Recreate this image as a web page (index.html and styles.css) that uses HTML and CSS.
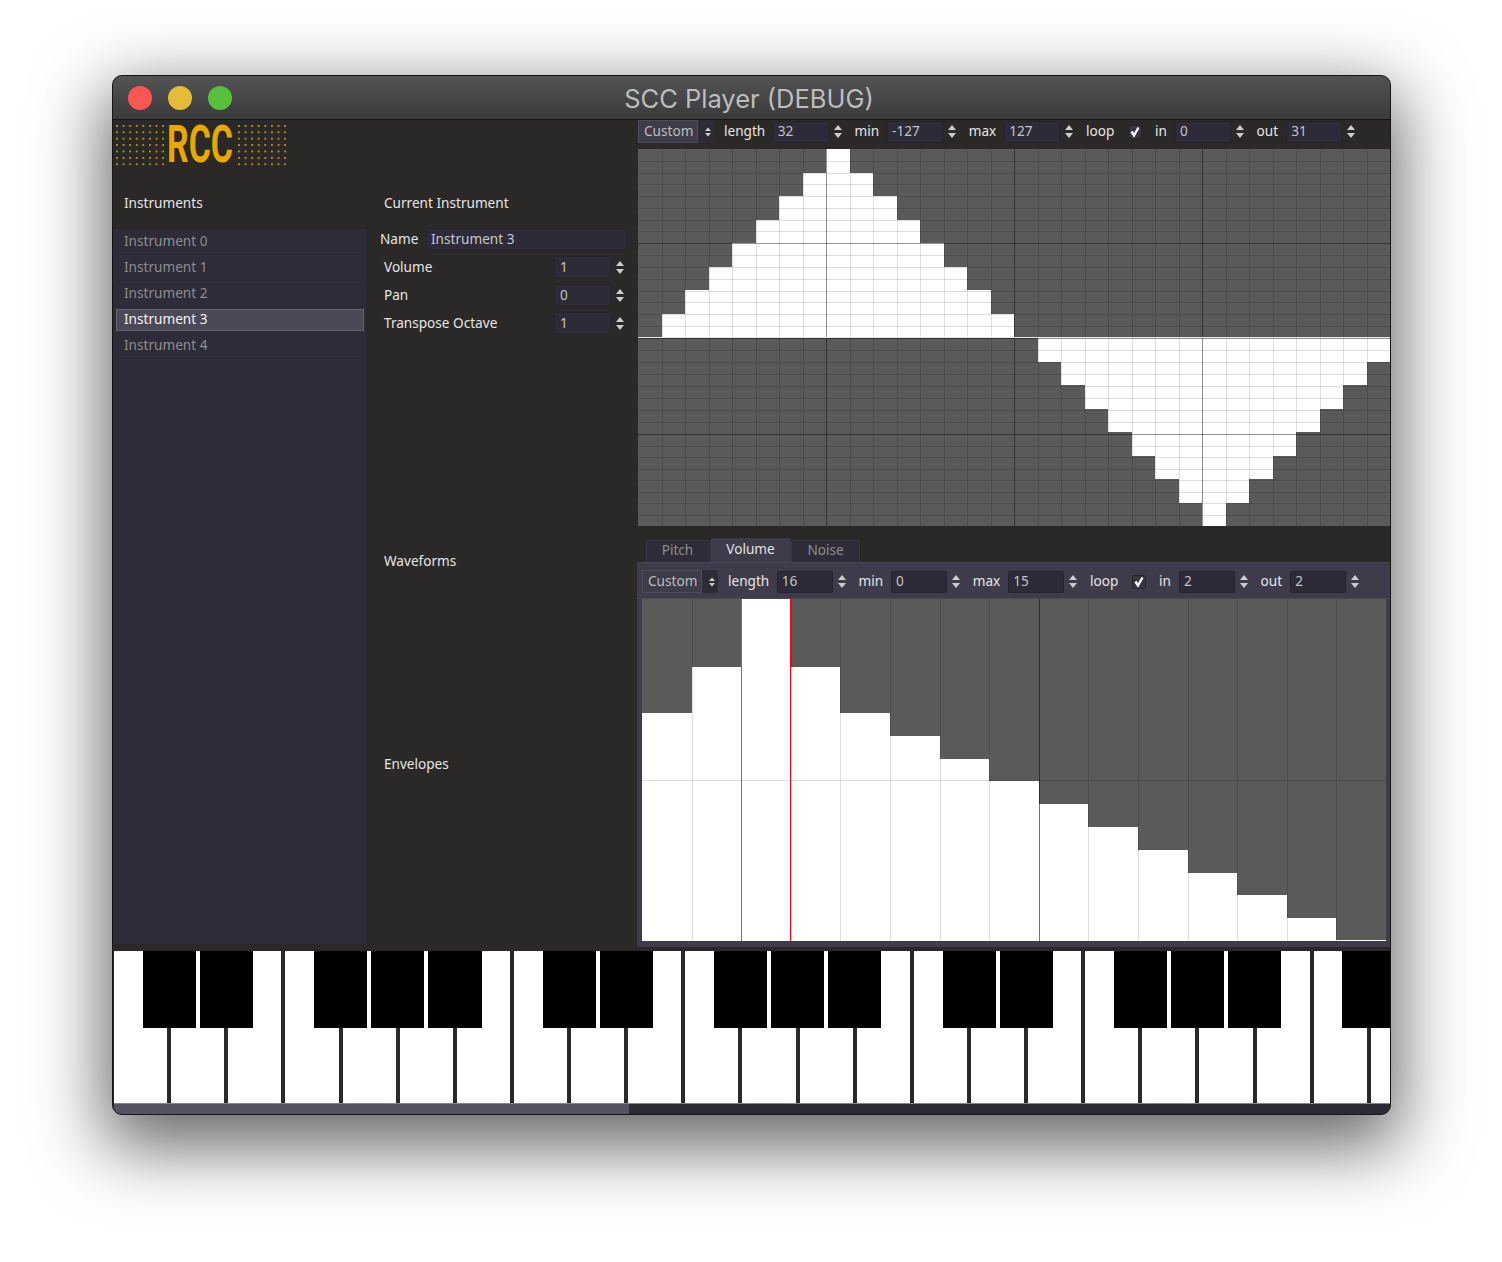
FILE: index.html
```html
<!DOCTYPE html>
<html lang="en">
<head>
    <meta charset="UTF-8">
    <title>SCC Player (DEBUG)</title>
    <link rel="stylesheet" href="styles.css">
</head>
<body>

    <svg class="defs" width="0" height="0">
        <symbol id="spin" viewBox="0 0 10 15">
            <path d="M5 1 L9 6 H1 Z M1 9 H9 L5 14 Z"/>
        </symbol>
        <symbol id="spin-small" viewBox="0 0 6 10">
            <path d="M3 0.5 L6 4 H0 Z M0 6 H6 L3 9.5 Z"/>
        </symbol>
    </svg>

    <div class="window">
        <div class="titlebar">
            <span class="light red"></span>
            <span class="light yellow"></span>
            <span class="light green"></span>
            <span class="title">SCC Player (DEBUG)</span>
        </div>

        <div class="main">
            <!-- instruments -->
            <div class="col-left">
                <div class="logo">
                    <span class="dots"></span>
                    <span class="logo-box"><span class="logo-text">RCC</span></span>
                    <span class="dots"></span>
                </div>
                <div class="heading">Instruments</div>
                <div class="list">
                    <div class="item">Instrument 0</div>
                    <div class="item">Instrument 1</div>
                    <div class="item">Instrument 2</div>
                    <div class="item selected">Instrument 3</div>
                    <div class="item">Instrument 4</div>
                </div>
            </div>

            <!-- current instrument -->
            <div class="col-mid">
                <div class="heading">Current Instrument</div>
                <div class="name-row">
                    <span class="name-label">Name</span>
                    <span class="input name-input">Instrument 3</span>
                </div>
                <div class="prop-row">
                    <span class="prop-label">Volume</span>
                    <span class="input">1</span>
                    <svg class="spin"><use href="#spin"/></svg>
                </div>
                <div class="prop-row">
                    <span class="prop-label">Pan</span>
                    <span class="input">0</span>
                    <svg class="spin"><use href="#spin"/></svg>
                </div>
                <div class="prop-row">
                    <span class="prop-label">Transpose Octave</span>
                    <span class="input">1</span>
                    <svg class="spin"><use href="#spin"/></svg>
                </div>
                <div class="heading waveforms">Waveforms</div>
                <div class="heading envelopes">Envelopes</div>
            </div>

            <!-- editors -->
            <div class="col-right">
                <div class="toolbar">
                    <span class="option">Custom</span>
                    <span class="option-arrow"><svg class="spin-small"><use href="#spin-small"/></svg></span>
                    <span class="tool-label first">length</span>
                    <span class="input">32</span>
                    <svg class="spin"><use href="#spin"/></svg>
                    <span class="tool-label">min</span>
                    <span class="input">-127</span>
                    <svg class="spin"><use href="#spin"/></svg>
                    <span class="tool-label">max</span>
                    <span class="input">127</span>
                    <svg class="spin"><use href="#spin"/></svg>
                    <span class="tool-label">loop</span>
                    <span class="check"><svg viewBox="0 0 12 12"><path d="M2.5 5.5 L5 9.5 L9.5 1.5"/></svg></span>
                    <span class="tool-label">in</span>
                    <span class="input">0</span>
                    <svg class="spin"><use href="#spin"/></svg>
                    <span class="tool-label">out</span>
                    <span class="input">31</span>
                    <svg class="spin"><use href="#spin"/></svg>
                </div>

                <svg id="wave" class="wave" width="752" height="377"></svg>

                <div class="tabs">
                    <span class="tab tab-pitch">Pitch</span>
                    <span class="tab active">Volume</span>
                    <span class="tab tab-noise">Noise</span>
                </div>
                <div class="tab-panel">
                    <div class="toolbar panel-toolbar">
                        <span class="option">Custom</span>
                        <span class="option-arrow"><svg class="spin-small"><use href="#spin-small"/></svg></span>
                        <span class="tool-label first">length</span>
                        <span class="input">16</span>
                        <svg class="spin"><use href="#spin"/></svg>
                        <span class="tool-label">min</span>
                        <span class="input">0</span>
                        <svg class="spin"><use href="#spin"/></svg>
                        <span class="tool-label">max</span>
                        <span class="input">15</span>
                        <svg class="spin"><use href="#spin"/></svg>
                        <span class="tool-label">loop</span>
                        <span class="check"><svg viewBox="0 0 12 12"><path d="M2.5 5.5 L5 9.5 L9.5 1.5"/></svg></span>
                        <span class="tool-label">in</span>
                        <span class="input">2</span>
                        <svg class="spin"><use href="#spin"/></svg>
                        <span class="tool-label">out</span>
                        <span class="input">2</span>
                        <svg class="spin"><use href="#spin"/></svg>
                    </div>
                    <svg id="envelope" class="envelope" width="744" height="342"></svg>
                </div>
            </div>
        </div>

        <div id="piano" class="piano"></div>
        <div class="scrollbar"><div class="thumb"></div></div>
    </div>

    <script src="app.js"></script>
</body>
</html>
```

FILE: styles.css
```css
:root {
    --bg: #2a2927;
    --list: #2d2c38;
    --input: #2c2b37;
    --panel: #3e3c4a;
    --plot: #5a5a5a;
    --text: #e6e6e6;
    --muted: #8e8e8e;
    --value: #c4c4c4;
}

* { margin: 0; padding: 0; box-sizing: border-box; }

html, body {
    height: 100%;
    overflow: hidden;
}

body {
    background: #fff;
    color: var(--text);
    font-family: "Noto Sans", sans-serif;
    font-size: 13.6px;
    line-height: 20px;
}

.defs { position: absolute; }

.window {
    width: 1279px;
    height: 1040px;
    margin: 75px 0 0 112px;
    display: flex;
    flex-direction: column;
    padding-left: 1px;
    background: var(--bg);
    border: 1px solid #161616;
    border-radius: 10px;
    overflow: hidden;
    box-shadow: 0 24px 70px 8px rgba(0,0,0,0.6);
}

/* title bar */
.titlebar {
    flex: none;
    height: 44px;
    margin-left: -1px;
    padding-left: 15px;
    display: flex;
    align-items: center;
    gap: 16px;
    position: relative;
    background: linear-gradient(#535353, #3a3a3a);
    border-bottom: 1px solid #141414;
}

.light {
    width: 24px;
    height: 24px;
    border-radius: 50%;
}
.red { background: #fc5753; }
.yellow { background: #e5bc3a; }
.green { background: #56c03b; }

.title {
    position: absolute;
    left: 511px;
    top: 7px;
    width: 250px;
    text-align: center;
    color: #bdbdbd;
    font-family: "Inter", sans-serif;
    font-size: 25.5px;
    line-height: 32px;
    white-space: nowrap;
}

.main {
    flex: none;
    height: 831px;
    display: flex;
}

/* left column */
.col-left {
    flex: none;
    width: 253px;
    display: flex;
    flex-direction: column;
    padding-bottom: 7px;
}

.logo {
    height: 48px;
    padding: 5px 0 0 2px;
    display: flex;
    gap: 3px;
}

.dots {
    width: 48px;
    height: 44px;
    background-image: radial-gradient(circle at 1px 1px, #c08f10 1px, transparent 1.3px);
    background-size: 6.6px 6.4px;
}

.logo-box {
    width: 68px;
    height: 40px;
}

.logo-text {
    display: inline-block;
    color: #e8a800;
    font-family: "Roboto", sans-serif;
    font-weight: 700;
    font-size: 52px;
    line-height: 40px;
    transform: scaleX(0.65);
    transform-origin: left center;
}

.heading {
    height: 20px;
    margin-left: 10px;
}
.col-left .heading { margin-top: 25px; }

.list {
    flex: 1;
    margin-top: 15px;
    padding: 0 2px;
    background: var(--list);
    border-top: 1px solid #26252f;
    border-right: 1px solid #26252f;
}

.item {
    height: 26px;
    padding: 2px 8px 0 8px;
    color: var(--muted);
    border-bottom: 1px solid #292833;
}

.item.selected {
    height: 22px;
    margin: 2px 0;
    padding: 0 7px;
    color: #f2f2f2;
    background: #4b4957;
    border: 1px solid #65636f;
    line-height: 18px;
}

/* middle column */
.col-mid {
    flex: none;
    width: 270px;
    padding-left: 7px;
    display: flex;
    flex-direction: column;
}
.col-mid .heading { margin: 73px 0 0 10px; }
.col-mid .heading.waveforms { margin-top: 211px; }
.col-mid .heading.envelopes { margin-top: 183px; }

.input {
    flex: none;
    width: 56px;
    height: 22px;
    padding-left: 4px;
    color: var(--value);
    background: var(--input);
    border: 1px solid #25242e;
    border-radius: 2px;
    line-height: 20px;
}

.name-row {
    display: flex;
    align-items: center;
    margin: 15px 0 6px 6px;
}
.name-label { width: 46px; }
.name-input { width: 201px; color: #c8c8c8; }

.prop-row {
    display: flex;
    align-items: center;
    height: 22px;
    margin: 0 0 6px 10px;
}
.prop-label { width: 171px; margin-right: -1px; }
.prop-row .input { width: 57px; padding-left: 5px; }

.spin {
    flex: none;
    width: 10px;
    height: 15px;
    margin-left: 4px;
    fill: #cdcdcd;
}

/* right column */
.col-right {
    flex: none;
    width: 753px;
    display: flex;
    flex-direction: column;
}

.toolbar {
    display: flex;
    align-items: center;
    height: 29px;
    padding: 0 0 6px 1px;
}
.toolbar .input { line-height: 18px; }

.option {
    height: 23px;
    width: 60px;
    padding-left: 5px;
    color: #bdbdbd;
    background: #3e3c4a;
    border: 1px solid #4e4c5a;
    line-height: 20px;
}

.option-arrow {
    width: 16px;
    height: 23px;
    padding-left: 7px;
    display: flex;
    align-items: center;
    background: #2c2b36;
    border-radius: 0 2px 2px 0;
}

.spin-small {
    width: 6px;
    height: 10px;
    fill: #cdcdcd;
}

.tool-label {
    margin: 0 8px 2px 11.7px;
    white-space: nowrap;
}
.tool-label.first { margin: 0 7.5px 2px 10px; }

.check {
    width: 14px;
    height: 14px;
    margin: 0 1px 0 6px;
    background: #35343f;
    border: 1px solid #25242e;
    border-radius: 2px;
}
.check svg {
    display: block;
    width: 12px;
    height: 12px;
    fill: none;
    stroke: #fff;
    stroke-width: 2.4;
}

.wave {
    display: block;
    flex: none;
    margin-left: 1px;
    background: var(--plot);
}

.envelope {
    display: block;
    flex: none;
    margin-left: 5px;
    background: var(--plot);
}

.tabs {
    display: flex;
    align-items: flex-end;
    height: 24px;
    margin: 12px 0 0 9px;
}

.tab {
    height: 22px;
    line-height: 18px;
    text-align: center;
    color: var(--muted);
    background: var(--list);
    border: 1px solid #3a3845;
    border-bottom: 0;
    border-radius: 3px 3px 0 0;
}
.tab-pitch { width: 63px; margin-right: 1px; }
.tab-noise { width: 69px; }

.tab.active {
    width: 81px;
    height: 24px;
    line-height: 20px;
    color: #e2e2e2;
    background: var(--panel);
}

.tab-panel {
    height: 385px;
    background: var(--panel);
    border-top: 1px solid #4a4856;
    border-radius: 2px 2px 0 0;
}

.panel-toolbar {
    height: 36px;
    padding: 2px 0 0 5px;
    border-bottom: 1px solid #4a4856;
}

/* piano */
.piano {
    flex: none;
    height: 152px;
    display: flex;
    gap: 4px;
    overflow: hidden;
}

.white-key {
    flex: none;
    width: 53.14px;
    position: relative;
    background: #fff;
}

.black-key {
    position: absolute;
    top: 0;
    left: 28.75px;
    width: 53.14px;
    height: 77px;
    background: #000;
    z-index: 1;
}

.scrollbar {
    flex: none;
    height: 11px;
    background: #2c2b33;
    border-top: 1px solid #85848c;
}

.thumb {
    width: 515px;
    height: 100%;
    background: #55535f;
}
```

FILE: app.js
```javascript
const NS = "http://www.w3.org/2000/svg";

function add(svg, tag, attrs) {
    const el = document.createElementNS(NS, tag);
    for (const k in attrs) el.setAttribute(k, attrs[k]);
    svg.appendChild(el);
}

function line(svg, x1, y1, x2, y2, color) {
    add(svg, "line", { x1, y1, x2, y2, stroke: color, "stroke-width": 1, "shape-rendering": "crispEdges" });
}

function rect(svg, x, y, width, height, fill = "#fff") {
    add(svg, "rect", { x, y, width, height, fill, "shape-rendering": "crispEdges" });
}

// waveform: 32 steps, triangle
const wave = document.getElementById("wave");
const waveW = 752, waveH = 377, top0 = 188, bottom0 = 189;
const stepW = waveW / 32, stepH = 23.5;
const MINOR = "rgba(0,0,0,0.13)", MAJOR = "rgba(0,0,0,0.42)";

for (let i = 0; i < 32; i++) {
    const v = i <= 16 ? 8 - Math.abs(i - 8) : -(8 - Math.abs(i - 24));
    const x = i * stepW;
    if (v > 0) rect(wave, x, top0 - v * stepH, stepW, v * stepH);
    else if (v < 0) rect(wave, x, bottom0, stepW, -v * stepH);
}
for (let i = 1; i < 32; i++) {
    const x = Math.round(i * stepW) + 0.5;
    line(wave, x, 0, x, waveH, i % 8 == 0 ? MAJOR : MINOR);
}
// the rows are not quite even in the two halves
const breaks = [0, 94, 189, 285, 377];
for (let i = 1; i < 32; i++) {
    const n = Math.floor(i / 8);
    const y = Math.round(breaks[n] + (breaks[n + 1] - breaks[n]) * (i % 8) / 8) + 0.5;
    line(wave, 0, y, waveW, y, i % 8 == 0 ? MAJOR : MINOR);
}
rect(wave, 0, top0, waveW, 1, "#e8e8e8");

// volume envelope
const env = document.getElementById("envelope");
const envW = 744, envH = 342;
const values = [10, 12, 15, 12, 10, 9, 8, 7, 6, 5, 4, 3, 2, 1, 0];
const colW = envW / values.length, rowH = envH / 15;

values.forEach((v, i) => {
    const h = Math.max(v * rowH, 1);
    rect(env, i * colW, envH - h, colW, h);
});
for (let i = 1; i < values.length; i++) {
    const x = Math.round(i * colW) + 0.5;
    line(env, x, 0, x, envH, i == 2 || i == 8 ? "rgba(0,0,0,0.55)" : MINOR);
}
line(env, 0, 181.5, envW, 181.5, MINOR);
rect(env, 148, 0, 1, envH, "#f00");

// piano
const piano = document.getElementById("piano");
const hasBlack = [1, 1, 0, 1, 1, 1, 0];

for (let i = 0; i < 23; i++) {
    const key = document.createElement("div");
    key.className = "white-key";
    if (hasBlack[i % 7]) {
        const black = document.createElement("div");
        black.className = "black-key";
        key.appendChild(black);
    }
    piano.appendChild(key);
}
```
